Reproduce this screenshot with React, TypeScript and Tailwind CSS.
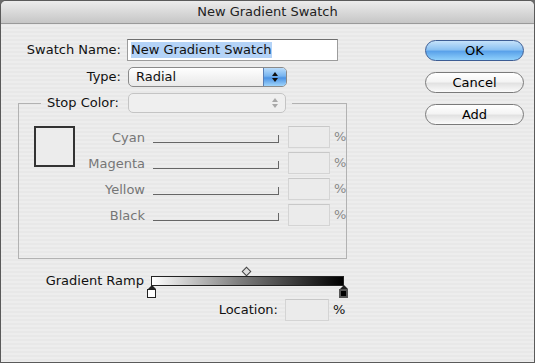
import React from "react";

const font = { fontFamily: '"DejaVu Sans", "Liberation Sans", sans-serif' };

function Arrows({ color }: { color: string }) {
  return (
    <svg width="8" height="12" viewBox="0 0 8 12">
      <path d="M4 1 L7 5 L1 5 Z" fill={color} />
      <path d="M4 11 L7 7 L1 7 Z" fill={color} />
    </svg>
  );
}

function CmykRow({ label }: { label: string }) {
  return (
    <div className="flex items-center h-[22px]">
      <div className="w-[70px] text-right text-[13px] text-[#767676] leading-none">{label}</div>
      <div className="ml-[8px] w-[126px] h-[8px] mt-[4px] border-b border-r border-[#666]" />
      <div className="ml-[9px] w-[42px] h-[22px] border border-[#d4d4d4] border-t-[#c8c8c8] bg-[#ebebeb]" />
      <div className="ml-[4px] text-[13px] text-[#888]">%</div>
    </div>
  );
}

function Button({ label, primary }: { label: string; primary?: boolean }) {
  return (
    <div
      className={
        "w-[99px] h-[21px] rounded-full flex items-center justify-center text-[13px] text-black " +
        (primary
          ? "border border-[#3d5d94] bg-[linear-gradient(180deg,#c5e2fa_0%,#8cc2f2_45%,#5aa2ea_55%,#8fd0fb_100%)]"
          : "border border-[#7a7a7a] bg-[linear-gradient(180deg,#ffffff_0%,#f4f4f4_45%,#e2e2e2_55%,#fbfbfb_100%)]")
      }
    >
      {label}
    </div>
  );
}

export default function App() {
  return (
    <div style={font} className="w-[535px] h-[363px] bg-[#6b6b6b]">
      <div className="w-[535px] h-[363px] border border-[#5a5a5a] rounded-t-[6px] overflow-hidden flex flex-col bg-[repeating-linear-gradient(180deg,#ededed_0px,#ededed_2px,#e8e8e8_2px,#e8e8e8_4px)]">
        <div className="h-[23px] shrink-0 flex items-center justify-center text-[13px] text-[#222] border-b border-[#9a9a9a] bg-[linear-gradient(180deg,#ececec_0%,#d9d9d9_50%,#c6c6c6_100%)]">
          New Gradient Swatch
        </div>
        <div className="flex flex-1">
          <div className="w-[400px] shrink-0 flex flex-col pt-[15px]">
            <div className="flex items-center h-[22px]">
              <div className="w-[120px] text-right text-[13px] text-[#111]">Swatch Name:</div>
              <div className="ml-[6px] w-[211px] h-[22px] border border-[#9c9c9c] border-t-[#6f6f6f] bg-white flex items-center pl-[3px]">
                <span className="bg-[#b4d3f7] text-[13px] text-[#111] leading-[16px]">New Gradient Swatch</span>
              </div>
            </div>
            <div className="flex items-center h-[20px] mt-[6px]">
              <div className="w-[120px] text-right text-[13px] text-[#111]">Type:</div>
              <div className="ml-[7px] w-[159px] h-[20px] rounded-[5px] border border-[#8a8a8a] flex overflow-hidden bg-[linear-gradient(180deg,#ffffff_0%,#f3f3f3_50%,#e9e9e9_100%)]">
                <div className="flex-1 pl-[7px] text-[13px] text-[#111] flex items-center">Radial</div>
                <div className="w-[23px] flex items-center justify-center border-l border-[#5a7fb5] bg-[linear-gradient(180deg,#b9dcfb_0%,#77b4ef_45%,#4c93e4_55%,#9fd4fb_100%)]">
                  <Arrows color="#111" />
                </div>
              </div>
            </div>
            <fieldset className="ml-[17px] mt-[6px] w-[329px] h-[166px] border border-[#b2b2b2] px-0 pb-0 pt-0">
              <legend className="ml-[22px] px-[6px] flex items-center h-[20px]">
                <span className="text-[13px] text-[#111]">Stop Color:</span>
                <div className="ml-[9px] w-[158px] h-[20px] rounded-[5px] border border-[#c4c4c4] flex items-center justify-end pr-[6px] bg-[#efefef]">
                  <Arrows color="#a8a8a8" />
                </div>
              </legend>
              <div className="flex pl-[15px] pt-[13px]">
                <div className="w-[41px] h-[41px] border-2 border-[#333] bg-[#ececec]" />
                <div className="flex flex-col gap-[4px]">
                  <CmykRow label="Cyan" />
                  <CmykRow label="Magenta" />
                  <CmykRow label="Yellow" />
                  <CmykRow label="Black" />
                </div>
              </div>
            </fieldset>
            <div className="flex items-center mt-[9px] h-[24px]">
              <div className="w-[143px] text-right text-[13px] text-[#111] pt-[2px]">Gradient Ramp</div>
              <div className="relative ml-[7px] w-[193px] h-[24px]">
                <div className="absolute left-[92px] top-0 w-[7px] h-[7px] rotate-45 border border-[#444] bg-[#ddd]" />
                <div className="absolute left-0 top-[8px] w-[193px] h-[10px] border border-[#222] bg-[linear-gradient(90deg,#ffffff_0%,#808080_45%,#000000_100%)]" />
                <div className="absolute left-[-4px] top-[17px] flex flex-col items-center">
                  <div className="w-0 h-0 border-l-[4px] border-r-[4px] border-b-[4px] border-l-transparent border-r-transparent border-b-[#222]" />
                  <div className="w-[9px] h-[9px] border border-[#222] bg-white" />
                </div>
                <div className="absolute left-[188px] top-[17px] flex flex-col items-center">
                  <div className="w-0 h-0 border-l-[4px] border-r-[4px] border-b-[4px] border-l-transparent border-r-transparent border-b-[#222]" />
                  <div className="w-[9px] h-[9px] border-2 border-[#555] bg-black" />
                </div>
              </div>
            </div>
            <div className="flex items-center mt-[7px] h-[22px]">
              <div className="w-[277px] text-right text-[13px] text-[#111]">Location:</div>
              <div className="ml-[7px] w-[44px] h-[22px] border border-[#d4d4d4] border-t-[#c8c8c8] bg-[#ebebeb]" />
              <div className="ml-[4px] text-[13px] text-[#111]">%</div>
            </div>
          </div>
          <div className="flex flex-col pt-[16px] pl-[24px] gap-[11px]">
            <Button label="OK" primary />
            <Button label="Cancel" />
            <Button label="Add" />
          </div>
        </div>
      </div>
    </div>
  );
}
